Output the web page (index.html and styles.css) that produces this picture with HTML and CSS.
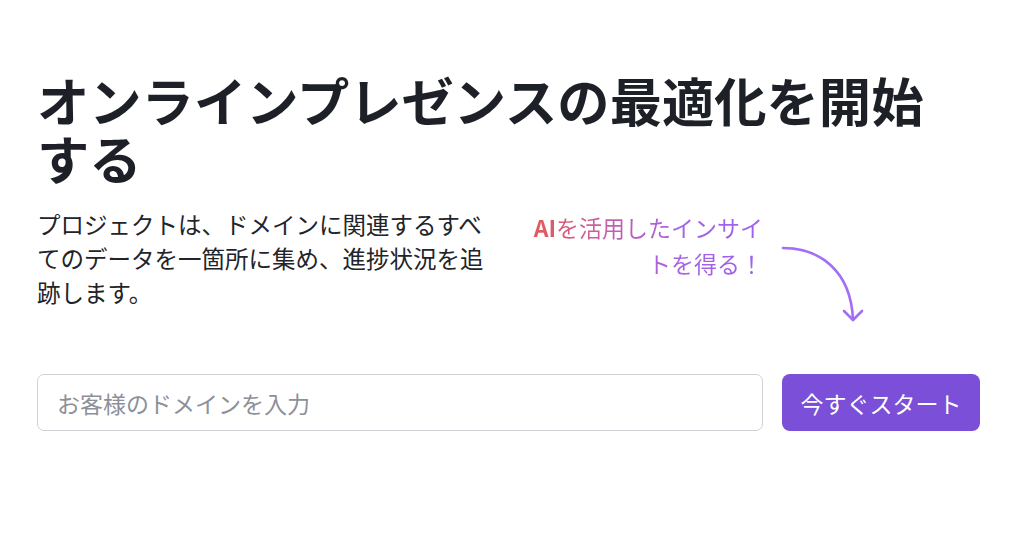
FILE: index.html
```html
<!DOCTYPE html>
<html lang="ja">
<head>
<meta charset="utf-8">
<link rel="stylesheet" href="styles.css">
</head>
<body>
<main class="hero">
  <h1 class="title">オンラインプレゼンスの最適化を開始する</h1>
  <div class="row">
    <p class="lead">プロジェクトは、ドメインに関連するすべてのデータを一箇所に集め、進捗状況を追跡します。</p>
    <div class="note">
      <span class="note-text"><b class="ai">AI</b>を活用したインサイトを得る！</span>
      <svg class="arrow" width="90" height="90" viewBox="0 0 90 90" aria-hidden="true">
        <path d="M4 8 C 40 8, 72 30, 74 80" fill="none" stroke="#a26df7" stroke-width="2.6" stroke-linecap="round"/>
        <path d="M65 71 L74 80 L83 71" fill="none" stroke="#a26df7" stroke-width="2.6" stroke-linecap="round" stroke-linejoin="round"/>
      </svg>
    </div>
  </div>
  <form class="signup">
    <input class="domain" type="text" placeholder="お客様のドメインを入力">
    <button class="start" type="button">今すぐスタート</button>
  </form>
</main>
</body>
</html>
```
FILE: styles.css
```css
* { box-sizing: border-box; }
body {
  margin: 0;
  background: #fff;
  font-family: "Noto Sans CJK JP", "Noto Sans", sans-serif;
  color: #1f2127;
}
.hero {
  padding: 70px 44px 0 37px;
}
.title {
  margin: 0;
  max-width: 910px;
  font-size: 52.3px;
  line-height: 58px;
  font-weight: 700;
  color: #1d2026;
}
.row {
  display: flex;
  align-items: flex-start;
  margin-top: 21px;
}
.lead {
  margin: 0;
  width: 460px;
  font-size: 23.5px;
  line-height: 34px;
  color: #222429;
}
.note {
  display: flex;
  align-items: flex-start;
  margin-left: 31px;
}
.note-text {
  width: 235px;
  text-align: right;
  font-size: 23px;
  line-height: 36px;
  margin-top: 2px;
  background: linear-gradient(90deg, #e35b57 0%, #c75f9e 30%, #a862e2 60%, #9d60f0 100%);
  -webkit-background-clip: text;
  background-clip: text;
  color: transparent;
}
.ai { font-weight: 700; }
.arrow {
  margin-left: 16px;
  margin-top: 33px;
}
.signup {
  display: flex;
  gap: 19px;
  margin: 44px 0 0;
}
.domain {
  flex: 1;
  height: 57px;
  border: 1px solid #cfd1d6;
  border-radius: 7px;
  padding: 0 19px;
  font-family: inherit;
  font-size: 23px;
  color: #1f2127;
  outline: none;
}
.domain::placeholder { color: #8d9099; }
.start {
  width: 198px;
  height: 57px;
  border: 0;
  border-radius: 8px;
  background: #7b4fd7;
  color: #fff;
  font-family: inherit;
  font-size: 23px;
}
```
